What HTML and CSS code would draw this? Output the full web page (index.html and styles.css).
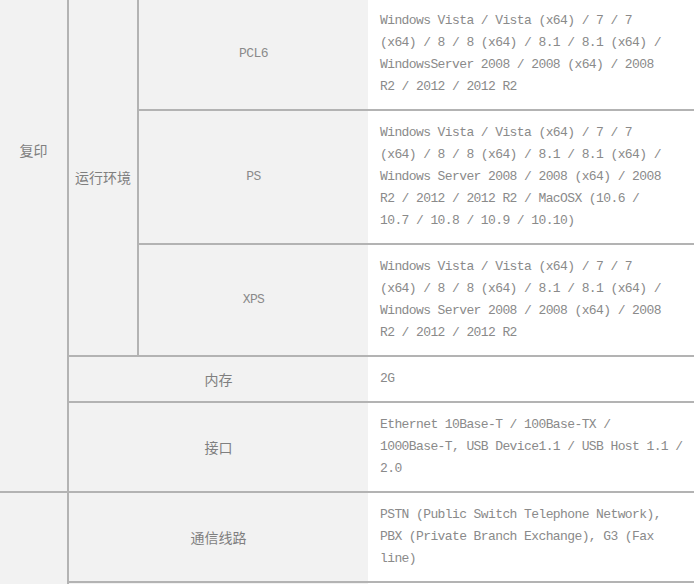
FILE: index.html
```html
<!DOCTYPE html>
<html lang="zh-CN">
<head>
<meta charset="utf-8">
<title>规格</title>
<link rel="stylesheet" href="styles.css">
</head>
<body>
<table class="spec">
  <colgroup>
    <col class="c1"><col class="c2"><col class="c3"><col class="c4">
  </colgroup>
  <tbody>
    <tr>
      <td class="lbl grp cn" rowspan="5">复印</td>
      <td class="lbl env cn" rowspan="3">运行环境</td>
      <td class="lbl sub">PCL6</td>
      <td class="val">Windows Vista / Vista (x64) / 7 / 7<br>(x64) / 8 / 8 (x64) / 8.1 / 8.1 (x64) /<br>WindowsServer 2008 / 2008 (x64) / 2008<br>R2 / 2012 / 2012 R2</td>
    </tr>
    <tr>
      <td class="lbl sub">PS</td>
      <td class="val">Windows Vista / Vista (x64) / 7 / 7<br>(x64) / 8 / 8 (x64) / 8.1 / 8.1 (x64) /<br>Windows Server 2008 / 2008 (x64) / 2008<br>R2 / 2012 / 2012 R2 / MacOSX (10.6 /<br>10.7 / 10.8 / 10.9 / 10.10)</td>
    </tr>
    <tr>
      <td class="lbl sub">XPS</td>
      <td class="val">Windows Vista / Vista (x64) / 7 / 7<br>(x64) / 8 / 8 (x64) / 8.1 / 8.1 (x64) /<br>Windows Server 2008 / 2008 (x64) / 2008<br>R2 / 2012 / 2012 R2</td>
    </tr>
    <tr>
      <td class="lbl sub cn" colspan="2">内存</td>
      <td class="val">2G</td>
    </tr>
    <tr>
      <td class="lbl sub cn" colspan="2">接口</td>
      <td class="val">Ethernet 10Base-T / 100Base-TX /<br>1000Base-T, USB Device1.1 / USB Host 1.1 /<br>2.0</td>
    </tr>
    <tr>
      <td class="lbl grp2 cn" rowspan="2"></td>
      <td class="lbl sub cn" colspan="2">通信线路</td>
      <td class="val">PSTN (Public Switch Telephone Network),<br>PBX (Private Branch Exchange), G3 (Fax<br>line)</td>
    </tr>
    <tr>
      <td class="lbl sub cn" colspan="2"></td>
      <td class="val"></td>
    </tr>
  </tbody>
</table>
</body>
</html>
```

FILE: styles.css
```css
html, body {
  margin: 0;
  padding: 0;
  background: #ffffff;
  overflow: hidden;
}

.spec {
  border-collapse: collapse;
  table-layout: fixed;
  width: 694px;
  margin-top: -3px;
  font-family: "Liberation Mono", "Noto Sans CJK SC", monospace;
  font-size: 13px;
  letter-spacing: -0.6px;
  line-height: 22px;
  color: #8a8a8a;
}

.c1 { width: 68px; }
.c2 { width: 70px; }
.c3 { width: 230px; }
.c4 { width: 326px; }

.spec td {
  border: 2px solid #b3b3b3;
  padding: 11px 12px;
  height: 22px;
}

.spec .lbl {
  background: #f2f2f2;
  text-align: center;
  vertical-align: middle;
  padding: 11px 0;
}

.spec .cn {
  font-family: "Noto Sans CJK SC", sans-serif;
  font-size: 14px;
  letter-spacing: 0;
  color: #7f7f7f;
  white-space: nowrap;
}

.spec .grp,
.spec .grp2 {
  border-left-style: hidden;
  vertical-align: top;
}

.spec .grp {
  padding-top: 140px;
}

.spec .sub {
  border-right-style: hidden;
}

.spec .val {
  background: #ffffff;
  text-align: left;
  vertical-align: middle;
  border-left-style: hidden;
  border-right-style: hidden;
  white-space: nowrap;
}
```
